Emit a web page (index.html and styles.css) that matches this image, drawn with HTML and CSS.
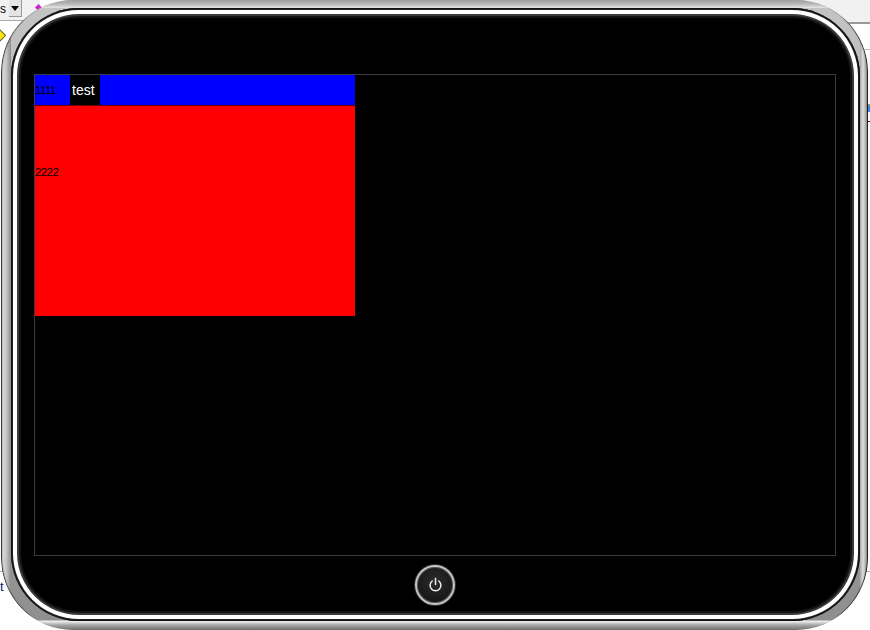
FILE: index.html
```html
<!DOCTYPE html>
<html lang="en">
<head>
<meta charset="utf-8">
<title>Tablet</title>
<link rel="stylesheet" href="styles.css">
</head>
<body>
<div class="desk">
  <div class="scrap scrap-topleft">
    <span class="scrap-s">s</span>
    <span class="scrap-btn"><svg width="8" height="5" viewBox="0 0 8 5"><path d="M0 0h8L4 5z" fill="#000"/></svg></span>
  </div>
  <div class="scrap scrap-diamond"></div>
  <div class="scrap scrap-pink"></div>
  <div class="scrap scrap-topright"></div>
  <div class="scrap scrap-line-r1"></div>
  <div class="scrap scrap-orange"></div>
  <div class="scrap scrap-purple"></div>
  <div class="scrap scrap-line-l1"></div>
  <div class="scrap scrap-line-r2"></div>
  <div class="scrap scrap-t">t</div>

  <div class="shell">
    <div class="bezel">
      <div class="screen">
        <div class="app">
          <div class="tabs">
            <div class="tab tab-num">1111</div>
            <div class="tab tab-test">test</div>
          </div>
          <div class="panel">2222</div>
        </div>
      </div>
      <div class="power">
        <svg width="15" height="16" viewBox="0 0 15 16" fill="none" stroke="#ececec" stroke-width="1.5" stroke-linecap="round">
          <path d="M7.5 1.5v6"/>
          <path d="M4.2 4a5.4 5.4 0 1 0 6.6 0"/>
        </svg>
      </div>
    </div>
  </div>
</div>
</body>
</html>
```

FILE: styles.css
```css
html, body {
  margin: 0;
  padding: 0;
  background: #fff;
}
.desk {
  position: relative;
  width: 870px;
  height: 630px;
  overflow: hidden;
  background: #fff;
  font-family: "Liberation Sans", Arial, sans-serif;
}
.scrap { position: absolute; }
.scrap-topleft {
  left: 0; top: 0;
  width: 40px; height: 20px;
  display: flex;
  align-items: flex-start;
  gap: 3px;
  background: #f1f1f1;
  border-bottom: 1px solid #aaa;
}
.scrap-s { font-size: 12px; line-height: 18px; color: #000; }
.scrap-btn {
  width: 12px; height: 16px;
  display: flex;
  align-items: center;
  justify-content: center;
  background: #e4e4e4;
  border-right: 1px solid #999;
  border-bottom: 1px solid #999;
}
.scrap-diamond {
  left: -7px; top: 30px;
  width: 9px; height: 9px;
  background: #ffe800;
  border: 1px solid #665;
  transform: rotate(45deg);
}
.scrap-pink {
  left: 36px; top: 5px;
  width: 5px; height: 5px;
  background: #d020d0;
  transform: rotate(45deg);
}
.scrap-topright {
  right: 0; top: 0;
  width: 70px; height: 22px;
  background: #f1f1f1;
  border-bottom: 2px solid #999;
}
.scrap-line-r1 {
  right: 0; top: 49px;
  width: 15px; height: 1px;
  background: #bbb;
}
.scrap-orange {
  right: 0; top: 104px;
  width: 2px; height: 7px;
  background: #3a8ae0;
  border-top: 1px solid #e08a20;
}
.scrap-purple {
  right: 0; top: 121px;
  width: 3px; height: 1px;
  background: #800080;
}
.scrap-line-l1 {
  left: 0; top: 571px;
  width: 6px; height: 1px;
  background: #aaa;
}
.scrap-line-r2 {
  right: 0; top: 571px;
  width: 6px; height: 1px;
  background: #aaa;
}
.scrap-t {
  left: 0; top: 579px;
  font-size: 13px;
  line-height: 16px;
  color: #0a1a70;
}

.shell {
  position: relative;
  box-sizing: border-box;
  margin-left: 1px;
  width: 867px;
  height: 630px;
  padding: 8px 8px 9px 10px;
  border-radius: 72px;
  background:
    linear-gradient(to bottom, #9d9d9d 0, #b8b8b8 4px, #e6e6e6 8px, transparent 8px, transparent calc(100% - 10px), #f4f4f4 calc(100% - 9px), #a8a8a8 calc(100% - 5px), #6f6f6f 100%),
    linear-gradient(to right, #dedede 0, #c8c8c8 5px, #8c8c8c 10px, transparent 10px, transparent calc(100% - 8px), #a8a8a8 calc(100% - 8px), #dcdcdc calc(100% - 5px), #8a8a8a 100%),
    linear-gradient(to bottom, #c4c4c4, #8e8e8e);
  box-shadow:
    inset 2px 0 1px -1px #222,
    inset -2px 0 1px -1px #111;
}
.bezel {
  box-sizing: border-box;
  width: 849px;
  height: 613px;
  padding-top: 66px;
  padding-right: 1px;
  display: flex;
  flex-direction: column;
  align-items: center;
  border-radius: 68px;
  background: #000;
  box-shadow:
    inset 0 0 0 1px #111,
    inset 0 0 0 2px #222,
    inset 0 0 0 6px #fff,
    inset 0 0 0 8px #3a3a3a,
    inset 0 0 0 10px #141414;
}
.screen {
  box-sizing: border-box;
  width: 802px;
  height: 482px;
  border: 1px solid #3c3c3c;
  background: #000;
  flex: none;
}
.app { width: 320px; }
.tabs {
  display: flex;
  height: 30px;
  background: #00f;
}
.tab {
  display: flex;
  align-items: center;
}
.tab-num {
  width: 35px;
  font-size: 11.5px;
  letter-spacing: -0.6px;
  color: #000;
}
.tab-test {
  box-sizing: border-box;
  width: 30px;
  padding-left: 2px;
  background: #000;
  color: #fff;
  font-size: 14px;
}
.panel {
  box-sizing: border-box;
  height: 211px;
  padding-top: 60px;
  line-height: 12px;
  background: #f00;
  border-top: 1px solid #600;
  color: #000;
  font-size: 11.5px;
  letter-spacing: -0.6px;
}
.power {
  box-sizing: border-box;
  margin-top: 9px;
  width: 40px;
  height: 40px;
  flex: none;
  display: flex;
  align-items: center;
  justify-content: center;
  border-radius: 50%;
  border: 2px solid #c4c4c4;
  background: radial-gradient(circle at 50% 40%, #2c2c2c, #161616 75%);
  box-shadow: inset 0 0 0 1px #555, 0 0 0 1px #333;
}
```
